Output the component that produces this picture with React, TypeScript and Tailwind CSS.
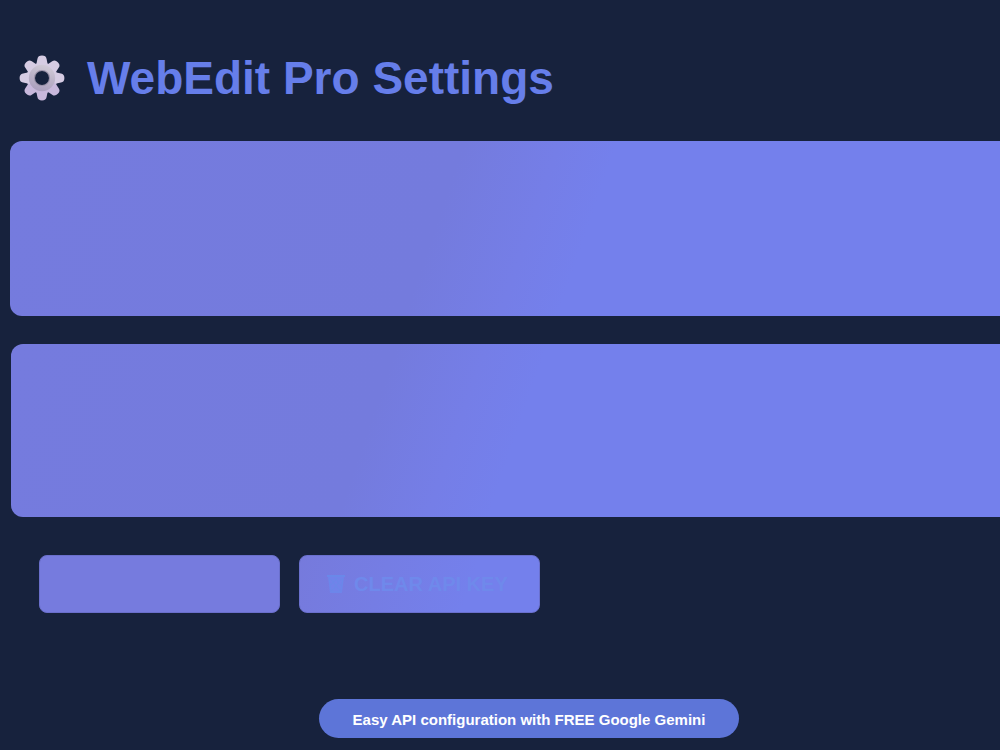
function GearIcon() {
  const teeth = [0, 45, 90, 135, 180, 225, 270, 315];
  return (
    <svg viewBox="0 0 46 46" className="size-[46px] shrink-0" aria-hidden="true">
      <defs>
        <linearGradient id="gearRing" x1="0.7" y1="0" x2="0.4" y2="1">
          <stop offset="0" stopColor="#d2ccd8" />
          <stop offset="0.5" stopColor="#bcb3c8" />
          <stop offset="1" stopColor="#ab9fbe" />
        </linearGradient>
        <mask id="gearHole">
          <rect width="46" height="46" fill="white" />
          <circle cx="23" cy="23" r="7" fill="black" />
        </mask>
      </defs>
      <g mask="url(#gearHole)">
        <circle cx="23" cy="23" r="15.5" fill="#d0c4e0" />
        {teeth.map((angle) => (
          <path
            key={angle}
            d="M17 11 L18.4 4 Q18.9 0.6 23 0.6 Q27.1 0.6 27.6 4 L29 11 Z"
            fill={angle > 90 && angle < 270 ? "#c8b8dc" : "#d6cce3"}
            transform={`rotate(${angle} 23 23)`}
          />
        ))}
        <circle cx="23" cy="23" r="13.2" fill="url(#gearRing)" />
        <circle cx="23" cy="23" r="7.5" fill="none" stroke="#9a91a8" strokeWidth="1.2" />
      </g>
    </svg>
  );
}

function BinIcon() {
  return (
    <svg viewBox="0 0 20 20" className="size-5 shrink-0" fill="none" stroke="#6a88e9" aria-hidden="true">
      <path d="M2 3 H18 L16 19 H4 Z" fill="#7083ea" stroke="none" />
      <path d="M1 2 H19" strokeWidth="2" />
      <path d="M3 4 L5 18 H15 L17 4 M5 5 L14 17 M9 4 L15 12 M15 5 L6 17 M11 4 L5 11" />
    </svg>
  );
}

export default function App() {
  return (
    <main className="min-h-screen overflow-hidden bg-[#17223d] pt-12 font-['Liberation_Sans',Arial,sans-serif]">
      <header className="flex items-center gap-[22px] px-[19px]">
        <GearIcon />
        <h1 className="text-[46px] leading-[60px] font-bold text-[#667eea]">WebEdit Pro Settings</h1>
      </header>

      <section className="mt-[33px] ml-[10px] h-[175px] rounded-l-xl bg-[linear-gradient(109deg,#757bde_0px,#747bdd_430px,#757ee7_520px,#7480ec_575px)]" />
      <section className="mt-7 ml-[11px] h-[173px] rounded-l-xl bg-[linear-gradient(109deg,#757bde_0px,#747bdd_365px,#757ee7_450px,#7480ec_508px)]" />

      <div className="mt-[38px] flex gap-[19px] px-[39px]">
        <button
          type="button"
          aria-label="Save"
          className="h-[58px] w-[241px] rounded-lg border border-[#6a6fcb] bg-[#767bde]"
        />
        <button
          type="button"
          className="flex h-[58px] w-[241px] items-center gap-2 rounded-lg border border-[#6a70cd] bg-[linear-gradient(109deg,#767adc,#7480ec_70%)] pl-[26px] text-[20px] font-bold text-[#6f89eb]"
        >
          <BinIcon />
          CLEAR API KEY
        </button>
      </div>

      <footer className="mt-[86px] flex justify-center pl-[58px]">
        <p className="rounded-full bg-[#5d75d8] px-[34px] pt-[11px] pb-2 text-[15px] leading-5 font-bold text-white">
          Easy API configuration with FREE Google Gemini
        </p>
      </footer>
    </main>
  );
}
